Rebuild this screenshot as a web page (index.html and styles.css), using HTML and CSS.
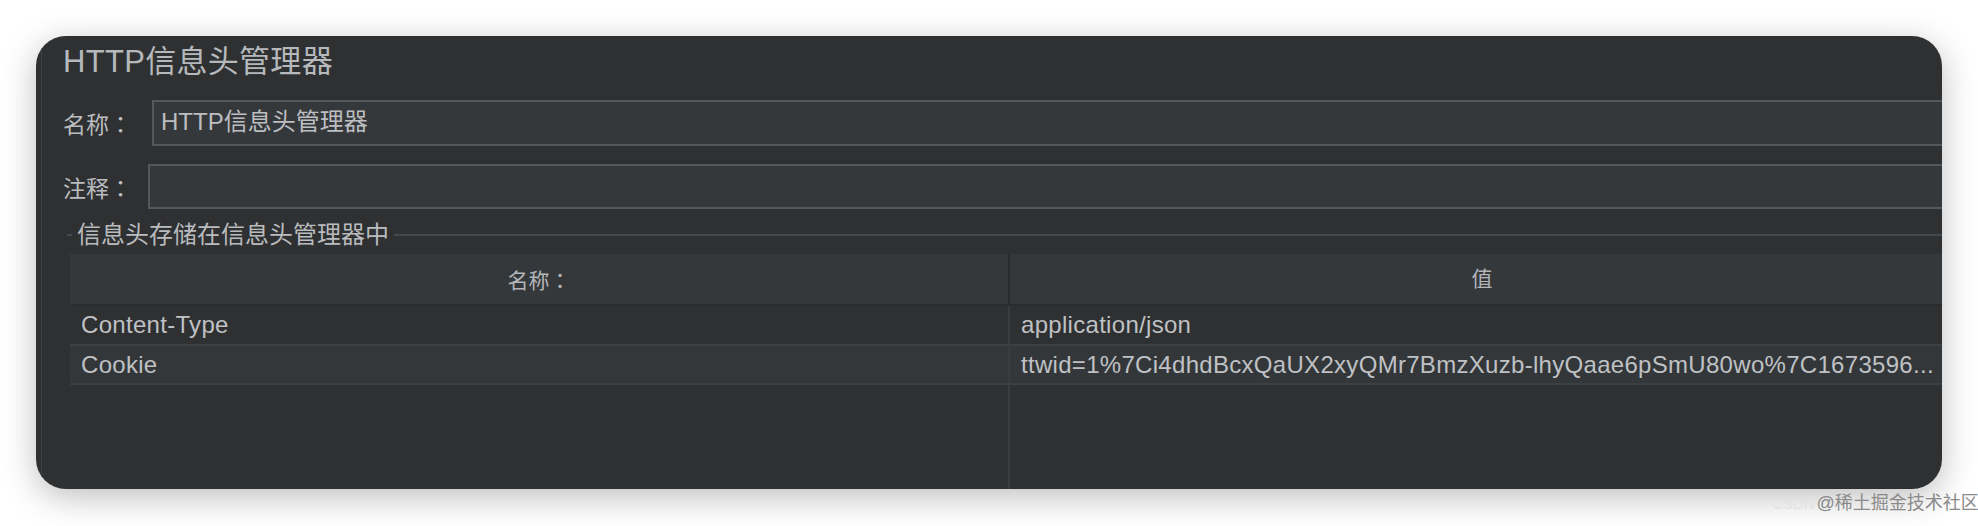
FILE: index.html
```html
<!DOCTYPE html>
<html lang="zh-CN">
<head>
<meta charset="utf-8">
<title>HTTP信息头管理器</title>
<link rel="stylesheet" href="styles.css">
</head>
<body>
<div class="stage">
  <div class="window">
    <div class="panel">
      <div class="title">HTTP信息头管理器</div>
      <div class="field field-name">
        <span class="label label-name">名称<span class="colon" lang="zh-TW">：</span></span>
        <div class="input">HTTP信息头管理器</div>
      </div>
      <div class="field field-comment">
        <span class="label label-comment">注释<span class="colon" lang="zh-TW">：</span></span>
        <div class="input"></div>
      </div>
      <div class="group">
        <div class="legend">
          <span class="legend-lead"></span>
          <span class="legend-text">信息头存储在信息头管理器中</span>
          <span class="legend-line"></span>
        </div>
        <div class="table">
          <div class="thead">
            <div class="th col1">名称<span class="colon" lang="zh-TW">：</span></div>
            <div class="th col2">值</div>
          </div>
          <div class="tr row-odd">
            <div class="td col1">Content-Type</div>
            <div class="td col2">application/json</div>
          </div>
          <div class="tr row-even">
            <div class="td col1">Cookie</div>
            <div class="td col2">ttwid=1%7Ci4dhdBcxQaUX2xyQMr7BmzXuzb-lhyQaae6pSmU80wo%7C1673596...</div>
          </div>
          <div class="tr filler">
            <div class="td col1"></div>
            <div class="td col2"></div>
          </div>
        </div>
      </div>
    </div>
  </div>
  <div class="wm"><span class="wm-faint">CSDN</span><span class="wm-gray">@稀土掘金技术社区</span></div>
</div>
</body>
</html>
```

FILE: styles.css
```css
html, body {
  margin: 0;
  padding: 0;
  background: #ffffff;
}
body {
  width: 1978px;
  height: 526px;
  overflow: hidden;
  font-family: "Liberation Sans", "Noto Sans CJK SC", sans-serif;
}
.stage {
  position: relative;
  width: 1978px;
  height: 526px;
  padding-top: 36px;
  box-sizing: border-box;
}
.window {
  margin-left: 36px;
  width: 1906px;
  height: 453px;
  background: #2e3032;
  border-radius: 30px;
  overflow: hidden;
  box-shadow: 0 8px 34px rgba(0, 0, 0, 0.26);
}
.panel {
  margin-left: 5px;
  height: 100%;
  border-left: 1px solid #3e4143;
  padding: 6px 0 0 21px;
  box-sizing: border-box;
  display: flex;
  flex-direction: column;
  color: #babcbf;
}
.title {
  font-size: 31px;
  line-height: 40px;
  height: 40px;
  color: #b6b9bc;
  white-space: nowrap;
  letter-spacing: 0.3px;
}
.colon {
  font-family: "Noto Sans CJK TC", "Noto Sans CJK JP", sans-serif;
}
.field {
  display: flex;
  align-items: center;
  margin-right: -20px;
}
.field-name {
  margin-top: 18px;
  height: 46px;
}
.field-comment {
  margin-top: 18px;
  height: 45px;
}
.label {
  font-size: 23px;
  flex: none;
  white-space: nowrap;
}
.label-name { width: 89px; }
.label-comment { width: 85px; }
.input {
  flex: 1;
  height: 100%;
  box-sizing: border-box;
  background: #35383a;
  border: 2px solid #55585b;
  font-size: 24px;
  line-height: 40px;
  padding-left: 7px;
  color: #bcbec1;
  white-space: nowrap;
}
.group {
  display: flex;
  flex-direction: column;
  flex: 1;
  margin-left: 4px;
  margin-top: 11px;
}
.legend {
  display: flex;
  align-items: center;
  height: 30px;
}
.legend-lead {
  width: 5px;
  height: 2px;
  background: #46494b;
}
.legend-text {
  font-size: 24px;
  line-height: 30px;
  padding: 0 5px;
  white-space: nowrap;
  color: #b9bbbe;
}
.legend-line {
  flex: 1;
  height: 2px;
  background: #46494b;
}
.table {
  margin-top: 4px;
  margin-left: 3px;
  margin-right: -12px;
  flex: 1;
  display: flex;
  flex-direction: column;
}
.thead, .tr {
  display: grid;
  grid-template-columns: 940px 1fr;
}
.thead {
  height: 52px;
  box-sizing: border-box;
  background: #35383a;
  border-bottom: 2px solid #292b2d;
}
.th {
  font-size: 21px;
  line-height: 50px;
  text-align: center;
  color: #b3b6b9;
}
.th.col1 {
  border-right: 2px solid #292b2d;
}
.tr {
  border-bottom: 2px solid #3d4042;
}
.row-odd {
  height: 40px;
  box-sizing: border-box;
}
.row-even {
  height: 39px;
  box-sizing: border-box;
  background: #34373a;
}
.td {
  font-size: 24px;
  line-height: 38px;
  padding-left: 11px;
  white-space: nowrap;
  overflow: hidden;
  letter-spacing: 0.3px;
  color: #bfc1c4;
}
.td.col1 {
  border-right: 2px solid #3a3d3f;
}
.filler {
  flex: 1;
  border-bottom: none;
}
.wm {
  position: absolute;
  left: 1772px;
  top: 492px;
  line-height: 22px;
  white-space: nowrap;
}
.wm-faint {
  font-size: 15px;
  color: #e3e3e3;
  margin-right: 2px;
}
.wm-gray {
  font-size: 18px;
  color: #8a8a8a;
}
```
